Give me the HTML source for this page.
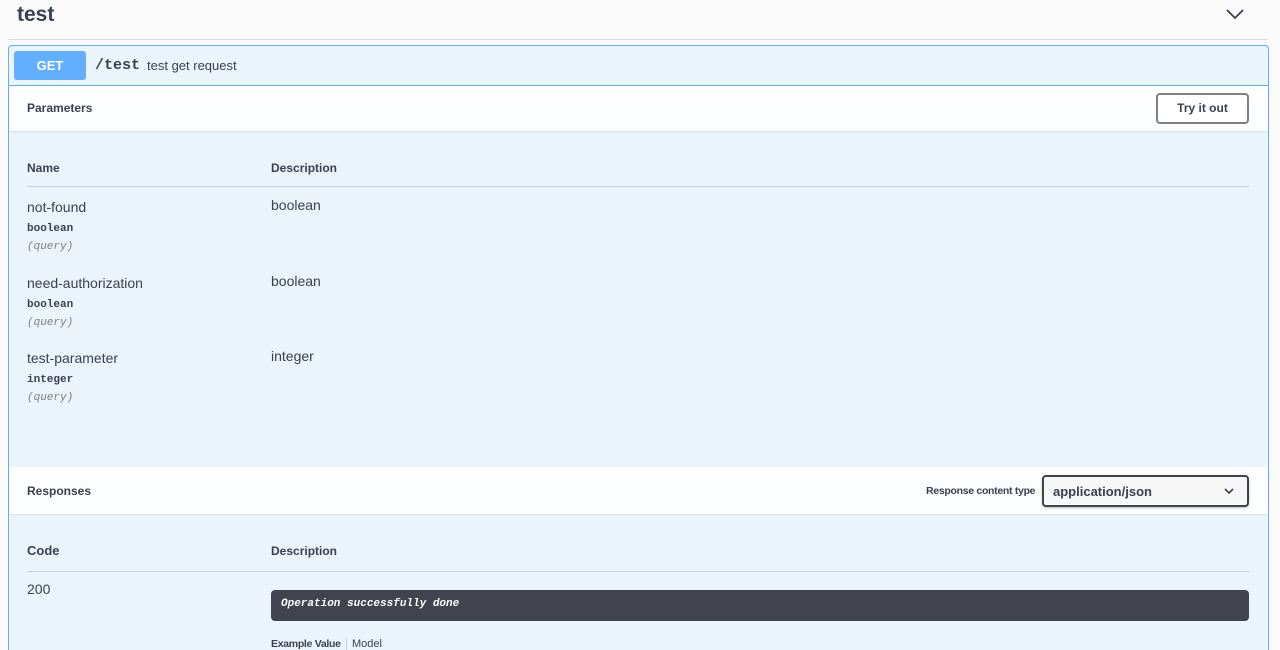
<!DOCTYPE html>
<html><head><meta charset="utf-8"><style>
*{box-sizing:border-box;margin:0;padding:0}
html,body{width:1280px;height:650px;overflow:hidden}
body{background:#fafafa;font-family:"Liberation Sans",sans-serif;color:#3b4151;position:relative}
.abs{position:absolute}
.mono{font-family:"Liberation Mono",monospace}
</style></head><body>
<div class="abs" style="left:17px;top:3px;font-size:21px;font-weight:bold;color:#3b4151">test</div>
<svg class="abs" style="left:1226px;top:7px" width="18" height="14" viewBox="0 0 18 14"><path d="M1 3 L9 11 L17 3" fill="none" stroke="#3b4151" stroke-width="1.8"/></svg>
<div class="abs" style="left:8px;top:39px;width:1260px;height:1px;background:#d8dbe0"></div>

<div class="abs" style="left:8px;top:45px;width:1261px;height:605px;border:1px solid #61affe;border-bottom:none;border-radius:4px 4px 0 0;background:#ebf3fb"></div>
<div class="abs" style="left:9px;top:85px;width:1259px;height:1px;background:#61affe"></div>
<div class="abs" style="left:14px;top:51px;width:72px;height:29px;background:#61affe;border-radius:3px;color:#fff;font-weight:bold;font-size:13px;text-align:center;line-height:29px">GET</div>
<div class="abs mono" style="left:95px;top:57px;font-size:15px;font-weight:bold;color:#3b4151">/test</div>
<div class="abs" style="left:147px;top:58px;font-size:13px;color:#3b4151">test get request</div>

<div class="abs" style="left:9px;top:86px;width:1259px;height:45px;background:#fcfdfe;box-shadow:0 1px 2px rgba(0,0,0,.08)"></div>
<div class="abs" style="left:27px;top:101px;font-size:12px;font-weight:bold">Parameters</div>
<div class="abs" style="left:1156px;top:93px;width:93px;height:31px;border:2px solid #808080;border-radius:4px;font-size:12px;font-weight:bold;text-align:center;line-height:27px;background:#fff">Try it out</div>

<div class="abs" style="left:27px;top:161px;font-size:12px;font-weight:bold">Name</div>
<div class="abs" style="left:271px;top:161px;font-size:12px;font-weight:bold">Description</div>
<div class="abs" style="left:27px;top:186px;width:1222px;height:1px;background:#c9d3dd"></div>

<div class="abs" style="left:27px;top:199px;font-size:14px">not-found</div>
<div class="abs mono" style="left:27px;top:223px;font-size:11px;font-weight:bold;line-height:13px">boolean</div>
<div class="abs mono" style="left:27px;top:241px;font-size:11px;font-style:italic;color:#808080;line-height:13px">(query)</div>
<div class="abs" style="left:271px;top:197px;font-size:14px">boolean</div>

<div class="abs" style="left:27px;top:275px;font-size:14px">need-authorization</div>
<div class="abs mono" style="left:27px;top:299px;font-size:11px;font-weight:bold;line-height:13px">boolean</div>
<div class="abs mono" style="left:27px;top:317px;font-size:11px;font-style:italic;color:#808080;line-height:13px">(query)</div>
<div class="abs" style="left:271px;top:273px;font-size:14px">boolean</div>

<div class="abs" style="left:27px;top:350px;font-size:14px">test-parameter</div>
<div class="abs mono" style="left:27px;top:374px;font-size:11px;font-weight:bold;line-height:13px">integer</div>
<div class="abs mono" style="left:27px;top:392px;font-size:11px;font-style:italic;color:#808080;line-height:13px">(query)</div>
<div class="abs" style="left:271px;top:348px;font-size:14px">integer</div>

<div class="abs" style="left:9px;top:467px;width:1259px;height:47px;background:#fcfdfe;box-shadow:0 1px 2px rgba(0,0,0,.08)"></div>
<div class="abs" style="left:27px;top:484px;font-size:12px;font-weight:bold">Responses</div>
<div class="abs" style="left:926px;top:485px;font-size:10.5px;font-weight:bold;letter-spacing:-0.3px;white-space:nowrap">Response content type</div>
<div class="abs" style="left:1042px;top:475px;width:207px;height:32px;border:2px solid #41444e;border-radius:4px;background:#f7f7f7;box-shadow:0 1px 2px rgba(0,0,0,.25)"></div>
<div class="abs" style="left:1053px;top:484px;font-size:13px;font-weight:bold">application/json</div>
<svg class="abs" style="left:1224px;top:487px" width="10" height="8" viewBox="0 0 10 8"><path d="M1 2 L5 6 L9 2" fill="none" stroke="#3b4151" stroke-width="1.6"/></svg>

<div class="abs" style="left:27px;top:543px;font-size:13px;font-weight:bold">Code</div>
<div class="abs" style="left:271px;top:544px;font-size:12px;font-weight:bold">Description</div>
<div class="abs" style="left:27px;top:571px;width:1222px;height:1px;background:#c9d3dd"></div>
<div class="abs" style="left:27px;top:581px;font-size:14px">200</div>
<div class="abs" style="left:271px;top:590px;width:978px;height:31px;background:#41444e;border-radius:4px"></div>
<div class="abs mono" style="left:281px;top:598px;font-size:11px;font-weight:bold;font-style:italic;color:#fff">Operation successfully done</div>
<div class="abs" style="left:271px;top:638px;font-size:10.5px;font-weight:bold;letter-spacing:-0.3px;white-space:nowrap;line-height:12px">Example Value</div>
<div class="abs" style="left:346px;top:638px;width:1px;height:12px;background:#c9d3dd"></div>
<div class="abs" style="left:352px;top:638px;font-size:11px;line-height:12px">Model</div>
</body></html>
